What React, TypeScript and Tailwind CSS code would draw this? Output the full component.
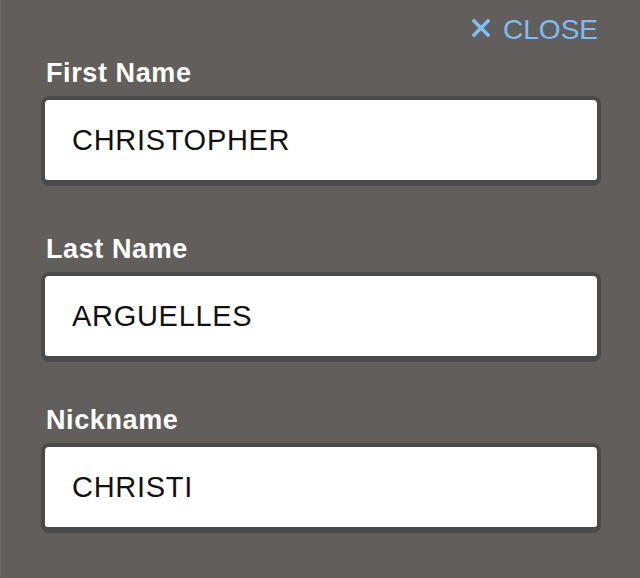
import React from "react";

const font = { fontFamily: '"Liberation Sans", Arial, Helvetica, sans-serif' };

function Field({ label, value, mt }: { label: string; value: string; mt: string }) {
  return (
    <div className={mt}>
      <div className="h-[28px] text-[27px] leading-[28px] font-bold text-white tracking-[0.6px] pl-[5px]">
        {label}
      </div>
      <div className="mt-[9px] h-[90px] rounded-[8px] border-[#4a4a4a] border-t-[4px] border-l-[4px] border-r-[4px] border-b-[6px] bg-white flex items-center pl-[27px]">
        <span className="text-[29px] leading-[32px] text-[#111] tracking-[0.7px]">{value}</span>
      </div>
    </div>
  );
}

export default function App() {
  return (
    <div style={font} className="w-[640px] h-[578px] bg-[#625e5b] border-l border-[#6e6a67] overflow-hidden">
      <div className="pt-[14px] pr-[42px] flex justify-end">
        <div className="flex items-center h-[32px] text-[#7fbdf7] text-[28px] leading-[32px]">
          <svg width="18" height="18" viewBox="0 0 18 18" className="mr-[13px] mt-[-4px]">
            <path d="M2 2 L16 16 M16 2 L2 16" stroke="#7fbdf7" strokeWidth="3.6" strokeLinecap="square" />
          </svg>
          <span>CLOSE</span>
        </div>
      </div>
      <div className="pl-[40px] pr-[39px]">
        <Field label="First Name" value="CHRISTOPHER" mt="mt-[13px]" />
        <Field label="Last Name" value="ARGUELLES" mt="mt-[49px]" />
        <Field label="Nickname" value="CHRISTI" mt="mt-[44px]" />
      </div>
    </div>
  );
}
